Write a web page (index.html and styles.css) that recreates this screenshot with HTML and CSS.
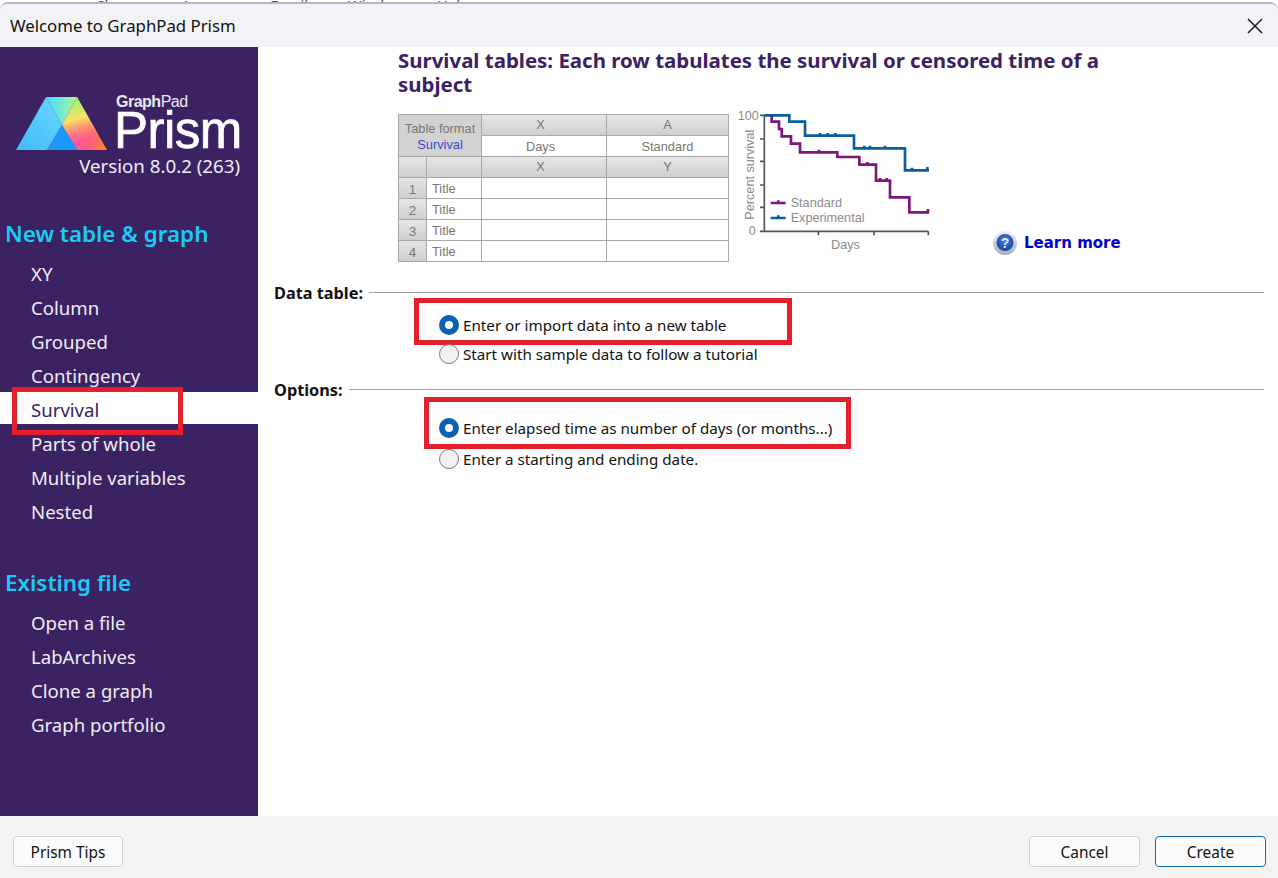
FILE: index.html
```html
<!DOCTYPE html>
<html lang="en">
<head>
<meta charset="utf-8">
<title>Welcome to GraphPad Prism</title>
<link rel="stylesheet" href="styles.css">
</head>
<body>
<div class="behind"><span>Change</span><span>Arrange</span><span>Family</span><span>Window</span><span>Help</span></div>
<div class="dialog">
  <header class="titlebar">
    <span class="title">Welcome to GraphPad Prism</span>
    <svg class="close" width="16" height="16" viewBox="0 0 16 16"><path d="M1 1L15 15M15 1L1 15" stroke="#1a1a1a" stroke-width="1.5" fill="none"/></svg>
  </header>
  <div class="body">
    <aside class="sidebar">
      <div class="logo">
        <svg class="logo-mark" width="92" height="54" viewBox="16 97 92 54">
          <defs>
            <linearGradient id="lg1" x1="0" y1="1" x2="1" y2="0"><stop offset="0" stop-color="#3fbcfa"/><stop offset="1" stop-color="#6cd4ff"/></linearGradient>
            <linearGradient id="lg2" x1="0" y1="0" x2="1" y2="0"><stop offset="0" stop-color="#45dff0"/><stop offset="0.6" stop-color="#7eeccc"/><stop offset="1" stop-color="#b8f078"/></linearGradient>
            <linearGradient id="lg3a" gradientUnits="userSpaceOnUse" x1="70" y1="140" x2="107" y2="150"><stop offset="0" stop-color="#ff4fb0"/><stop offset="0.55" stop-color="#ff5f78"/><stop offset="1" stop-color="#ff8c10"/></linearGradient>
            <linearGradient id="lg3b" gradientUnits="userSpaceOnUse" x1="74" y1="104" x2="84" y2="140"><stop offset="0" stop-color="#a8f070"/><stop offset="0.4" stop-color="#f4ec60" stop-opacity="0.95"/><stop offset="1" stop-color="#ffb040" stop-opacity="0"/></linearGradient>
            <linearGradient id="lg4" x1="0" y1="0" x2="1" y2="0"><stop offset="0" stop-color="#2a94f8"/><stop offset="1" stop-color="#109cff"/></linearGradient>
          </defs>
          <polygon points="16,150 46,97 62,125 47,150" fill="url(#lg1)"/>
          <polygon points="46,97 77,97 62,125" fill="url(#lg2)"/>
          <polygon points="77,97 107,150 77,150 62,125" fill="url(#lg3a)"/>
          <polygon points="77,97 107,150 77,150 62,125" fill="url(#lg3b)"/>
          <polygon points="47,150 62,125 77,150" fill="url(#lg4)"/>
        </svg>
        <div class="logo-text">
          <div class="logo-small"><b>Graph</b>Pad</div>
          <div class="logo-big">Prism</div>
        </div>
      </div>
      <div class="version">Version 8.0.2 (263)</div>
      <h2 class="nav-head">New table &amp; graph</h2>
      <nav class="nav">
        <a class="nav-item">XY</a>
        <a class="nav-item">Column</a>
        <a class="nav-item">Grouped</a>
        <a class="nav-item">Contingency</a>
        <a class="nav-item active">Survival<i class="redbox rb-nav"></i></a>
        <a class="nav-item">Parts of whole</a>
        <a class="nav-item">Multiple variables</a>
        <a class="nav-item">Nested</a>
      </nav>
      <h2 class="nav-head second">Existing file</h2>
      <nav class="nav">
        <a class="nav-item">Open a file</a>
        <a class="nav-item">LabArchives</a>
        <a class="nav-item">Clone a graph</a>
        <a class="nav-item">Graph portfolio</a>
      </nav>
    </aside>
    <main class="main">
      <h1 class="heading">Survival tables: Each row tabulates the survival or censored time of a subject</h1>
      <div class="preview">
        <div class="sheet">
          <div class="c hd fmt">Table format<em>Survival</em></div>
          <div class="c hd xc up">X</div><div class="c hd up">A</div>
          <div class="c wh xc">Days</div><div class="c wh">Standard</div>
          <div class="c hd"></div><div class="c hd"></div><div class="c hd xc up">X</div><div class="c hd up">Y</div>
          <div class="c hd num">1</div><div class="c wh left">Title</div><div class="c wh"></div><div class="c wh"></div>
          <div class="c hd num">2</div><div class="c wh left">Title</div><div class="c wh"></div><div class="c wh"></div>
          <div class="c hd num">3</div><div class="c wh left">Title</div><div class="c wh"></div><div class="c wh"></div>
          <div class="c hd num">4</div><div class="c wh left">Title</div><div class="c wh"></div><div class="c wh"></div>
        </div>
        <svg class="chart" width="200" height="150" viewBox="0 0 600 450">
          <path d="M43 5V355M30 7H43M30 78H43M30 145H43M30 216H43M30 283H43M30 355H535M205 355V367M372 355V367M535 355V367" fill="none" stroke="#555" stroke-width="5"/>
          <path d="M43 7H118V26H165V68H312V106H465V172H537M210 68V60M233 68V60M256 68V60M343 106V98M360 106V98M405 106V98M486 172V164M532 172V162" fill="none" stroke="#0a5f9e" stroke-width="8"/>
          <path d="M65 7V26H87V48H95V70H123V92H150V118H262V132H328V155H378V203H420V253H478V298H537M207 118V110M352 155V147M390 203V195M410 203V195M534 298V288" fill="none" stroke="#7f1480" stroke-width="8"/>
          <path d="M62 270H107M85 270V262" stroke-width="8" fill="none" stroke="#7f1480"/>
          <path d="M62 315H107M85 315V307" stroke-width="8" fill="none" stroke="#0a5f9e"/>
          <g class="chart-text">
            <text x="122" y="283">Standard</text>
            <text x="122" y="328">Experimental</text>
            <text x="243" y="408">Days</text>
            <text x="-37" y="20">100</text>
            <text x="-4" y="367">0</text>
            <text transform="translate(12 320) rotate(-90)">Percent survival</text>
          </g>
        </svg>
        <a class="learn">
          <svg width="26" height="26" viewBox="0 0 26 26">
            <defs>
              <radialGradient id="hb" cx="0.5" cy="0.4" r="0.6"><stop offset="0" stop-color="#4a86e0"/><stop offset="1" stop-color="#173f9c"/></radialGradient>
              <linearGradient id="hr" x1="0" y1="0" x2="0" y2="1"><stop offset="0" stop-color="#f0f3f8"/><stop offset="1" stop-color="#a6adb8"/></linearGradient>
            </defs>
            <circle cx="13" cy="13" r="12" fill="url(#hr)"/>
            <circle cx="13" cy="12.5" r="8.5" fill="url(#hb)"/>
            <text x="13" y="17.5" class="help-q">?</text>
          </svg>
          <span>Learn more</span>
        </a>
      </div>
      <div class="section"><b>Data table:</b><hr></div>
      <div class="opts first">
        <label class="radio on">Enter or import data into a new table<i class="redbox rb-a"></i></label>
        <label class="radio">Start with sample data to follow a tutorial</label>
      </div>
      <div class="section s2"><b>Options:</b><hr></div>
      <div class="opts second">
        <label class="radio on">Enter elapsed time as number of days (or months...)<i class="redbox rb-b"></i></label>
        <label class="radio">Enter a starting and ending date.</label>
      </div>
    </main>
  </div>
  <footer class="footer">
    <button class="btn">Prism Tips</button>
    <span class="spacer"></span>
    <button class="btn wide">Cancel</button>
    <button class="btn wide primary">Create</button>
  </footer>
</div>
</body>
</html>
```
FILE: styles.css
```css
*, *::before, *::after { box-sizing: border-box; }
html, body { margin: 0; height: 100%; overflow: hidden; background: #fff; }
body { font-family: "Noto Sans", "Open Sans", sans-serif; color: #111; width: 1278px; height: 878px; position: relative; }
.behind { height: 2px; overflow: hidden; display: flex; gap: 32px; padding-left: 95px; font-size: 15px; line-height: 10px; color: #555; }
.dialog { height: 876px; display: flex; flex-direction: column; border-top: 2px solid #b8b8b8; border-radius: 8px 8px 0 0; overflow: hidden; }
.titlebar { height: 43px; flex: none; background: #f3f2f6; display: flex; align-items: center; justify-content: space-between; padding: 0 15px 0 10px; }
.title { font-size: 16.8px; }
.body { flex: 1; display: flex; min-height: 0; }
.sidebar { width: 258px; flex: none; background: #3b2263; color: #fff; padding-top: 45px; }
.logo { display: flex; padding-left: 16px; align-items: flex-end; height: 59px; }
.logo-mark { flex: none; margin-right: 6px; }
.logo-text { line-height: 1; }
.logo-small { font-family: "Liberation Sans", sans-serif; font-size: 16px; margin: 0 0 0 2px; letter-spacing: -0.5px; color: #ece8f2; }
.logo-big { font-family: "Liberation Sans", sans-serif; font-size: 51px; line-height: 41px; letter-spacing: -0.5px; -webkit-text-stroke: 0.7px #fff; }
.version { font-size: 18.7px; text-align: right; padding-right: 18px; margin-top: 3px; line-height: 24px; color: #f0edf5; }
.nav-head { margin: 41px 0 0 5px; font-size: 22.4px; line-height: 30px; font-weight: 600; color: #18ccf8; }
.nav-head.second { margin-top: 42px; }
.nav { display: flex; flex-direction: column; gap: 2px; margin-top: 7px; }
.nav-item { height: 32px; padding: 3px 0 0 31px; font-size: 18.6px; line-height: 30px; color: #efecf4; position: relative; display: block; }
.nav-item.active { background: #fff; color: #3b2263; }
.redbox { position: absolute; border: 5px solid #e4202c; pointer-events: none; }
.rb-nav { left: 12px; top: -5px; width: 171px; height: 48px; }
.rb-a { left: -25px; top: -17px; width: 378px; height: 47px; }
.rb-b { left: -15px; top: -21px; width: 427px; height: 52px; }
.main { flex: 1; padding: 0 14px 0 16px; position: relative; }
.heading { margin: 1px 0 0 124px; width: 730px; font-size: 20.45px; line-height: 24px; font-weight: 700; color: #3b2263; }
.preview { display: flex; align-items: flex-start; margin: 18px 0 0 124px; height: 168px; }
.sheet { width: 331px; height: 148px; flex: none; display: grid; grid-template-columns: 28px 55px 125px 122px; grid-template-rows: repeat(7, 21px); border-left: 1px solid #a8a8a8; border-top: 1px solid #a8a8a8; font-family: "Liberation Sans", sans-serif; font-size: 12.8px; color: #777; }
.c { display: flex; align-items: center; justify-content: center; border-right: 1px solid #a8a8a8; border-bottom: 1px solid #a8a8a8; }
.hd { background: linear-gradient(#e6e6e6, #cfcfcf); }
.wh { background: #fff; }
.xc { padding-right: 7px; }
.up { padding-bottom: 2px; }
.num { font-size: 13.5px; padding-top: 2px; }
.left { justify-content: flex-start; padding-left: 5px; }
.fmt { grid-column: 1 / 3; grid-row: 1 / 3; flex-direction: column; background: #d2d2d2; line-height: 16px; padding-top: 2px; }
.fmt em { font-style: normal; color: #3f48cc; }
.chart { flex: none; margin: -1px 0 0 21px; overflow: visible; }
.chart-text text { font-family: "Liberation Sans", sans-serif; font-size: 38px; fill: #8c8c8c; }
.learn { display: flex; align-items: center; gap: 6px; margin: 116px 0 0 42px; color: #0000cc; font-family: "DejaVu Sans", sans-serif; font-weight: 700; font-size: 15px; flex: none; }
.help-q { font-family: "Liberation Sans", sans-serif; font-size: 14px; font-weight: 700; fill: #dfe9fa; text-anchor: middle; }
.section { display: flex; align-items: center; gap: 6px; height: 22px; font-size: 16.3px; line-height: 22px; }
.section b { color: #111; font-weight: 700; }
.section hr { flex: 1; margin: 0 0 2px; border: 0; border-top: 1px solid #a0a0a0; }
.opts { display: flex; flex-direction: column; margin-left: 165px; }
.opts.first { margin-top: 11px; gap: 9px; margin-bottom: 15px; }
.opts.second { margin-top: 17px; gap: 11px; }
.radio { position: relative; display: flex; align-items: center; height: 20px; padding-left: 24px; font-size: 15.2px; white-space: nowrap; }
.radio::before { content: ""; position: absolute; left: 0; top: 0; width: 20px; height: 20px; border-radius: 50%; border: 1px solid #7c7c7c; background: #f1f1f1; }
.radio.on::before { border: 6px solid #0b5fb4; background: #fff; }
.footer { height: 62px; flex: none; background: #f3f3f3; display: flex; align-items: flex-start; padding: 20px 12px 0 13px; gap: 15px; }
.spacer { flex: 1; }
.btn { height: 31px; width: 110px; background: #fbfbfb; border: 1px solid #cfcfcf; border-radius: 4px; font: 15.4px "Noto Sans", sans-serif; color: #111; padding: 1px 0 0; }
.btn.wide { width: 111px; }
.btn.primary { border: 1.5px solid #1668a8; }
```
